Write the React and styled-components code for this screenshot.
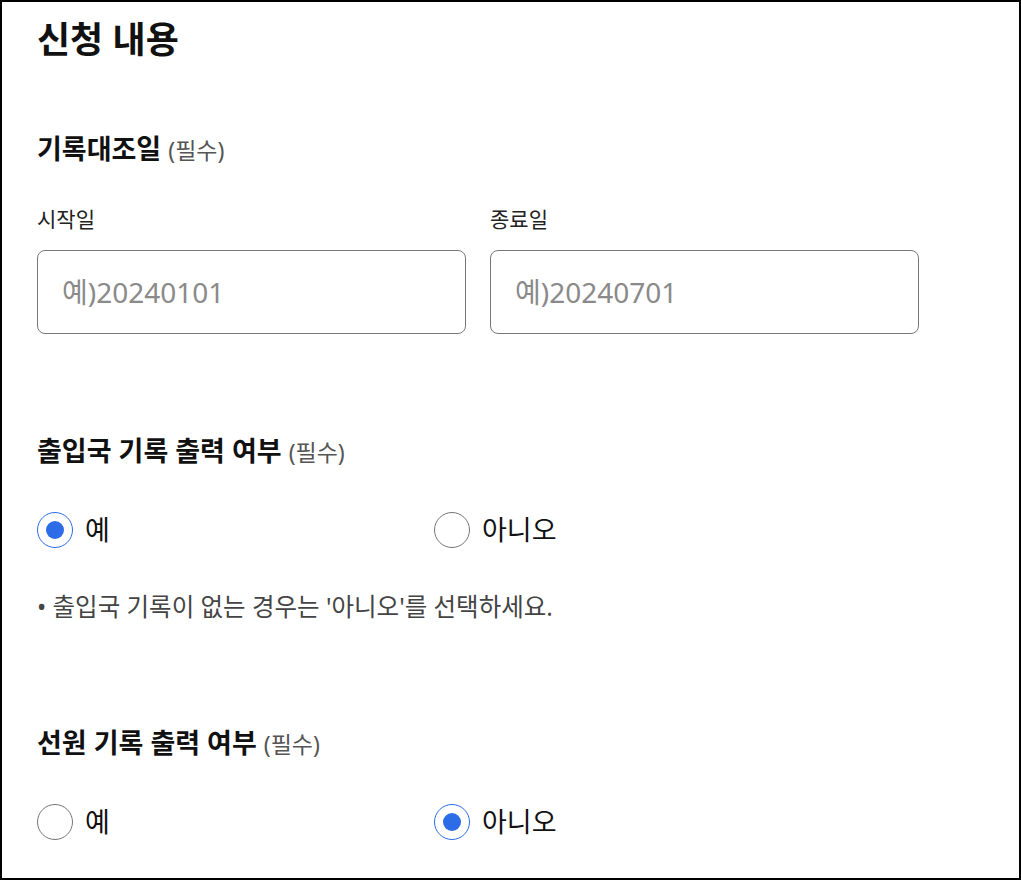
import React, { useState } from "react";
import styled, { createGlobalStyle } from "styled-components";

const GlobalStyle = createGlobalStyle`
  html, body {
    margin: 0;
    padding: 0;
    background: #fff;
  }
  * {
    box-sizing: border-box;
  }
`;

const FONT = `"Noto Sans", "Noto Sans CJK KR", sans-serif`;

function Radio({ checked, label, onSelect }) {
  return (
    <RadioLabel onClick={onSelect}>
      <RadioCircle checked={checked}>{checked && <RadioDot />}</RadioCircle>
      <RadioText>{label}</RadioText>
    </RadioLabel>
  );
}

function App() {
  const [entry, setEntry] = useState("yes");
  const [seaman, setSeaman] = useState("no");
  const [start, setStart] = useState("");
  const [end, setEnd] = useState("");

  return (
    <Frame>
      <GlobalStyle />
      <Title>신청 내용</Title>

      <Heading $top={70}>
        기록대조일 <Required>(필수)</Required>
      </Heading>
      <DateRow>
        <Field>
          <SubLabel>시작일</SubLabel>
          <DateInput
            placeholder="예)20240101"
            value={start}
            onChange={(e) => setStart(e.target.value)}
          />
        </Field>
        <Field>
          <SubLabel>종료일</SubLabel>
          <DateInput
            placeholder="예)20240701"
            value={end}
            onChange={(e) => setEnd(e.target.value)}
          />
        </Field>
      </DateRow>

      <Heading $top={100}>
        출입국 기록 출력 여부 <Required>(필수)</Required>
      </Heading>
      <RadioGroup>
        <Radio checked={entry === "yes"} label="예" onSelect={() => setEntry("yes")} />
        <Radio checked={entry === "no"} label="아니오" onSelect={() => setEntry("no")} />
      </RadioGroup>
      <Note>• 출입국 기록이 없는 경우는 '아니오'를 선택하세요.</Note>

      <Heading $top={105}>
        선원 기록 출력 여부 <Required>(필수)</Required>
      </Heading>
      <RadioGroup>
        <Radio checked={seaman === "yes"} label="예" onSelect={() => setSeaman("yes")} />
        <Radio checked={seaman === "no"} label="아니오" onSelect={() => setSeaman("no")} />
      </RadioGroup>
    </Frame>
  );
}

export default App;

const Frame = styled.div`
  width: 1021px;
  height: 880px;
  border: 2px solid #000;
  padding: 15px 35px 0;
  overflow: hidden;
  font-family: ${FONT};
  color: #111;
  display: flex;
  flex-direction: column;
`;

const Title = styled.h1`
  margin: 0;
  font-size: 36px;
  line-height: 45px;
  font-weight: 700;
  color: #111;
`;

const Heading = styled.h2`
  margin: ${(p) => p.$top}px 0 0;
  font-size: 27px;
  line-height: 34px;
  font-weight: 700;
  color: #111;
`;

const Required = styled.span`
  font-size: 23px;
  font-weight: 400;
  color: #555;
`;

const DateRow = styled.div`
  display: grid;
  grid-template-columns: 429px 429px;
  column-gap: 24px;
  margin-top: 38px;
`;

const Field = styled.div`
  display: flex;
  flex-direction: column;
  gap: 17px;
`;

const SubLabel = styled.label`
  font-size: 21px;
  line-height: 28px;
  color: #222;
`;

const DateInput = styled.input`
  width: 100%;
  height: 84px;
  border: 1px solid #777;
  border-radius: 8px;
  padding: 0 24px;
  font-family: ${FONT};
  font-size: 28px;
  color: #222;
  outline: none;
  &::placeholder {
    color: #8a8a8a;
  }
`;

const RadioGroup = styled.div`
  display: grid;
  grid-template-columns: 397px 1fr;
  margin-top: 43px;
`;

const RadioLabel = styled.div`
  display: flex;
  align-items: center;
  gap: 12px;
  height: 36px;
  cursor: pointer;
`;

const RadioCircle = styled.span`
  width: 36px;
  height: 36px;
  border-radius: 50%;
  border: ${(p) => (p.checked ? "1.5px solid #2c6ce6" : "1px solid #767676")};
  display: flex;
  align-items: center;
  justify-content: center;
  flex-shrink: 0;
`;

const RadioDot = styled.span`
  width: 18px;
  height: 18px;
  border-radius: 50%;
  background: #2c6ce6;
`;

const RadioText = styled.span`
  font-size: 27px;
  line-height: 36px;
  color: #111;
`;

const Note = styled.p`
  margin: 45px 0 0;
  font-size: 24.5px;
  line-height: 28px;
  color: #444;
`;
